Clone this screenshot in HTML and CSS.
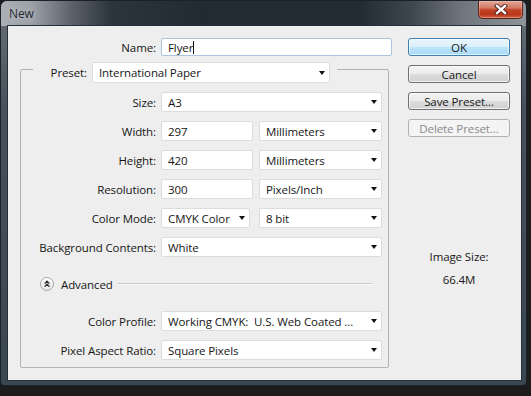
FILE: index.html
```html
<!DOCTYPE html>
<html>
<head>
<meta charset="utf-8">
<title>New</title>
<link rel="stylesheet" href="styles.css">
</head>
<body>
<div class="window">
  <div class="titlebar">
    <span class="title">New</span>
    <div class="close">
      <svg width="14" height="11" viewBox="0 0 14 11">
        <path d="M3 2 L11 9 M11 2 L3 9" stroke="#4a1a10" stroke-width="4.2" stroke-linecap="square"/>
        <path d="M3 2 L11 9 M11 2 L3 9" stroke="#ffffff" stroke-width="2.4" stroke-linecap="square"/>
      </svg>
    </div>
  </div>
  <div class="content">
    <div class="main">
      <div class="name-row">
        <span class="name-label">Name:</span>
        <div class="field input focused name-field">Flyer<span class="caret"></span></div>
      </div>
      <div class="group">
        <div class="legend">
          <span class="legend-label">Preset:</span>
          <div class="field select preset-field">International Paper</div>
        </div>
        <div class="grow first">
          <span class="glabel">Size:</span>
          <div class="field select full">A3</div>
        </div>
        <div class="grow">
          <span class="glabel">Width:</span>
          <div class="field input num">297</div>
          <div class="field select unit">Millimeters</div>
        </div>
        <div class="grow">
          <span class="glabel">Height:</span>
          <div class="field input num">420</div>
          <div class="field select unit">Millimeters</div>
        </div>
        <div class="grow">
          <span class="glabel">Resolution:</span>
          <div class="field input num">300</div>
          <div class="field select unit">Pixels/Inch</div>
        </div>
        <div class="grow">
          <span class="glabel">Color Mode:</span>
          <div class="field select mode">CMYK Color</div>
          <div class="field select bits">8 bit</div>
        </div>
        <div class="grow">
          <span class="glabel">Background Contents:</span>
          <div class="field select full">White</div>
        </div>
        <div class="advanced">
          <svg class="adv-icon" width="14" height="14" viewBox="0 0 14 14">
            <defs>
              <linearGradient id="ag" x1="0" y1="0" x2="0" y2="1">
                <stop offset="0" stop-color="#ffffff"/>
                <stop offset="1" stop-color="#e4e4e4"/>
              </linearGradient>
            </defs>
            <circle cx="7" cy="7" r="6.5" fill="url(#ag)" stroke="#a8a8a8"/>
            <path d="M4.6 6.6 L7 4.2 L9.4 6.6 M4.6 9.6 L7 7.2 L9.4 9.6" fill="none" stroke="#2a2a2a" stroke-width="1.3"/>
          </svg>
          <span class="adv-text">Advanced</span>
          <span class="adv-line"></span>
        </div>
        <div class="grow adv-first">
          <span class="glabel">Color Profile:</span>
          <div class="field select full">Working CMYK:&nbsp; U.S. Web Coated ...</div>
        </div>
        <div class="grow">
          <span class="glabel">Pixel Aspect Ratio:</span>
          <div class="field select full">Square Pixels</div>
        </div>
      </div>
    </div>
    <div class="side">
      <div class="btn default">OK</div>
      <div class="btn">Cancel</div>
      <div class="btn">Save Preset...</div>
      <div class="btn disabled">Delete Preset...</div>
      <div class="size-label">Image Size:</div>
      <div class="size-value">66.4M</div>
    </div>
  </div>
</div>
</body>
</html>
```
FILE: styles.css
```css
html, body {
  margin: 0;
  padding: 0;
}
body {
  background: #1c1c1d;
  width: 531px;
  height: 396px;
  overflow: hidden;
  font-family: "Open Sans", "Noto Sans", sans-serif;
  font-size: 11.5px;
  letter-spacing: -0.1px;
  color: #161616;
}
.window {
  width: 527px;
  height: 386px;
  box-sizing: border-box;
  border: 1px solid #1b2127;
  border-radius: 7px 7px 4px 4px;
  background: linear-gradient(to bottom, #6a7178 0, #46515b 110px, #3a4652 100%);
  display: flex;
  flex-direction: column;
  overflow: hidden;
}
.titlebar {
  height: 25px;
  display: flex;
  align-items: flex-start;
  padding-left: 8px;
  background:
    linear-gradient(to right, #a9afb4 0, #9ca2a8 30px, #5c636b 70px, #2c343d 110px, #222a33 200px, #232b34 360px, #3e464e 410px, #6e757c 460px, #8f959b 526px);
}
.title {
  margin-top: 4px;
  font-size: 12px;
  color: #1f2a33;
  text-shadow: 0 0 6px rgba(255,255,255,0.55);
}
.close {
  margin-left: auto;
  margin-right: 3px;
  width: 45px;
  height: 18px;
  box-sizing: border-box;
  border: 1px solid #5b2218;
  border-top: none;
  border-radius: 0 0 5px 5px;
  background: linear-gradient(to bottom, #e3a596 0, #d37a66 40%, #c34424 52%, #b9361a 80%, #d0654a 100%);
  box-shadow: inset 0 0 0 1px rgba(255,220,210,0.35);
  display: flex;
  align-items: center;
  justify-content: center;
}
.content {
  margin: 0 5px 5px 7px;
  flex: 1;
  background: #eeeeee;
  box-shadow: 0 0 0 1px #27303a;
  display: flex;
  padding-top: 12px;
}
.main {
  width: 384px;
  display: flex;
  flex-direction: column;
}
.name-row {
  display: flex;
  align-items: center;
  height: 18px;
}
.name-label {
  width: 148px;
  margin-right: 5px;
  text-align: right;
}
.field {
  box-sizing: border-box;
  height: 20px;
  background: #ffffff;
  border: 1px solid #dcdcdc;
  border-radius: 2px;
  display: flex;
  align-items: center;
  padding-left: 6px;
  white-space: nowrap;
  overflow: hidden;
  position: relative;
}
.select::after {
  content: "";
  position: absolute;
  right: 4px;
  top: 50%;
  margin-top: -2px;
  border-left: 3.5px solid transparent;
  border-right: 3.5px solid transparent;
  border-top: 4px solid #111;
}
.name-field {
  width: 231px;
  height: 18px;
}
.focused {
  border-color: #a9c6de;
}
.caret {
  display: inline-block;
  width: 1px;
  height: 13px;
  background: #111;
  margin-left: 0;
}
.group {
  margin-top: 13px;
  margin-left: 12px;
  width: 369px;
  box-sizing: border-box;
  border: 1px solid #b3b3b3;
  border-radius: 2px;
  padding: 0 6px 7px 0;
  display: flex;
  flex-direction: column;
}
.legend {
  margin-top: -8px;
  margin-left: 12px;
  align-self: flex-start;
  display: flex;
  align-items: center;
  background: #eeeeee;
  padding: 0 7px 0 12px;
}
.legend-label {
  width: 42px;
  margin-right: 5px;
  text-align: right;
}
.preset-field {
  width: 238px;
  height: 21px;
}
.grow {
  display: flex;
  align-items: center;
  height: 20px;
  margin-top: 9px;
}
.glabel {
  width: 135px;
  margin-right: 5px;
  text-align: right;
  white-space: nowrap;
}
.full {
  width: 221px;
}
.num {
  width: 92px;
  margin-right: 6px;
}
.unit {
  width: 123px;
}
.mode {
  width: 89px;
  margin-right: 9px;
}
.bits {
  width: 123px;
}
.advanced {
  display: flex;
  align-items: center;
  height: 16px;
  margin-top: 19px;
  padding-left: 19px;
}
.adv-icon {
  display: block;
  margin-right: 7px;
}
.adv-text {
  margin-right: 5px;
}
.adv-line {
  flex: 1;
  height: 1px;
  background: #c8c8c8;
  border-bottom: 1px solid #fafafa;
  margin-right: 10px;
}
.adv-first {
  margin-top: 19px;
}
.side {
  margin-left: 16px;
  width: 102px;
  display: flex;
  flex-direction: column;
  align-items: stretch;
}
.btn {
  box-sizing: border-box;
  height: 18px;
  margin-bottom: 9px;
  border: 1px solid #707070;
  border-radius: 3px;
  background: linear-gradient(to bottom, #f3f3f3 0, #ebebeb 50%, #dddddd 50%, #d0d0d0 100%);
  box-shadow: inset 0 0 0 1px rgba(255,255,255,0.7);
  display: flex;
  align-items: center;
  justify-content: center;
  color: #1a1a1a;
}
.btn.default {
  border-color: #3c7fb1;
  background: linear-gradient(to bottom, #eaf6fd 0, #d9f0fc 50%, #bee6fd 50%, #a7d9f5 100%);
}
.btn.disabled {
  border-color: #adb2b5;
  background: #f4f4f4;
  box-shadow: none;
  color: #8a8a8a;
}
.size-label {
  margin-top: 103px;
  height: 16px;
  line-height: 16px;
  text-align: center;
}
.size-value {
  margin-top: 7px;
  height: 16px;
  line-height: 16px;
  text-align: center;
}
```
